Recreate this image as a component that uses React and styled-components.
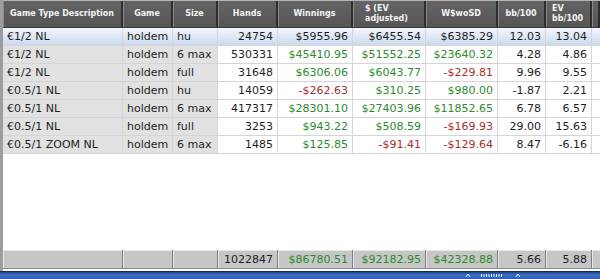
import React from "react";
import styled, { createGlobalStyle } from "styled-components";

const GlobalStyle = createGlobalStyle`
    html, body {
        margin: 0;
        padding: 0;
        background: #ffffff;
        overflow: hidden;
    }
`;

const COLS = "120px 50px 45px 60px 75px 73px 72px 48px 46px 1fr";

const Frame = styled.div`
    width: 600px;
    height: 279px;
    display: flex;
    flex-direction: column;
    font-family: "DejaVu Sans", Verdana, sans-serif;
`;

const Grid = styled.div`
    flex: 1;
    display: flex;
    flex-direction: column;
    border-left: 3px solid #9d9d9d;
    background: #ffffff;
    min-height: 0;
`;

const HeaderRow = styled.div`
    display: grid;
    grid-template-columns: ${COLS};
    height: 28px;
    background: linear-gradient(#636363, #565656);
    border-top: 1px solid #b4b4b4;
    box-sizing: border-box;
`;

const HeadCell = styled.div`
    display: flex;
    align-items: center;
    justify-content: ${(p) => (p.$left ? "flex-start" : "center")};
    padding-left: ${(p) => p.$pad || 0}px;
    color: #f4f4f4;
    font-weight: bold;
    font-size: 8px;
    line-height: 10px;
    border-right: 2px solid #2e2e2e;
    box-shadow: inset 1px 0 0 #8a8a8a;
    border-bottom: 1px solid #3a3a3a;
    box-sizing: border-box;
`;

const Row = styled.div`
    display: grid;
    grid-template-columns: ${COLS};
    height: 18px;
    background: ${(p) =>
        p.$selected ? "linear-gradient(#f3f6fb, #c8d7ec)" : "transparent"};
`;

const Cell = styled.div`
    display: flex;
    align-items: center;
    justify-content: ${(p) => (p.$right ? "flex-end" : "flex-start")};
    padding: 0 4px;
    font-size: 11px;
    white-space: nowrap;
    color: ${(p) => p.$color || "#1e1e1e"};
    background: ${(p) => (p.$gray && !p.$selected ? "#e1e1e1" : "transparent")};
    border-right: 1px solid #d5d5d5;
    border-bottom: 1px solid #d5d5d5;
    box-sizing: border-box;
`;

const Spacer = styled.div`
    flex: 1;
    background: #ffffff;
`;

const FooterRow = styled.div`
    display: grid;
    grid-template-columns: ${COLS};
    height: 19px;
    margin-bottom: 2px;
    background: #c6c6c6;
`;

const FootCell = styled.div`
    display: flex;
    align-items: center;
    justify-content: flex-end;
    padding: 0 4px;
    font-size: 11px;
    color: ${(p) => p.$color || "#1e1e1e"};
    border-right: 1px solid #7e7e7e;
    box-shadow: inset 1px 1px 0 #e8e8e8;
    border-bottom: 1px solid #8c8c8c;
    box-sizing: border-box;
`;

const BlueBar = styled.div`
    height: 7px;
    display: flex;
    align-items: flex-start;
    padding-left: 464px;
    background: linear-gradient(#1c3f86, #3c6ec4 40%, #2d5eb3);
    border-top: 1px solid #0f2a5c;
`;

const GREEN = "#2d8a2d";
const RED = "#a3302f";

const rows = [
    ["€1/2 NL", "holdem", "hu", "24754", "$5955.96", "$6455.54", "$6385.29", "12.03", "13.04"],
    ["€1/2 NL", "holdem", "6 max", "530331", "$45410.95", "$51552.25", "$23640.32", "4.28", "4.86"],
    ["€1/2 NL", "holdem", "full", "31648", "$6306.06", "$6043.77", "-$229.81", "9.96", "9.55"],
    ["€0.5/1 NL", "holdem", "hu", "14059", "-$262.63", "$310.25", "$980.00", "-1.87", "2.21"],
    ["€0.5/1 NL", "holdem", "6 max", "417317", "$28301.10", "$27403.96", "$11852.65", "6.78", "6.57"],
    ["€0.5/1 NL", "holdem", "full", "3253", "$943.22", "$508.59", "-$169.93", "29.00", "15.63"],
    ["€0.5/1 ZOOM NL", "holdem", "6 max", "1485", "$125.85", "-$91.41", "-$129.64", "8.47", "-6.16"],
];

const moneyColor = (v, selected) => {
    if (selected) return "#1e1e1e";
    return v.startsWith("-") ? RED : GREEN;
};

const ScrollMarks = () => (
    <svg width="60" height="6" viewBox="0 0 60 6">
        <path d="M2 5 L4 2 L6 5" stroke="#e8eefa" strokeWidth="1" fill="none" />
        <path d="M52 5 L54 2 L56 5" stroke="#e8eefa" strokeWidth="1" fill="none" />
        {[...Array(9)].map((_, i) => (
            <rect key={i} x={17 + i * 2.5} y={2} width={1} height={3} fill="#e8eefa" />
        ))}
    </svg>
);

const App = () => {
    return (
        <Frame>
            <GlobalStyle />
            <Grid>
                <HeaderRow>
                    <HeadCell>Game Type Description</HeadCell>
                    <HeadCell>Game</HeadCell>
                    <HeadCell>Size</HeadCell>
                    <HeadCell>Hands</HeadCell>
                    <HeadCell>Winnings</HeadCell>
                    <HeadCell $left $pad={12}>$ (EV<br />adjusted)</HeadCell>
                    <HeadCell>W$woSD</HeadCell>
                    <HeadCell>bb/100</HeadCell>
                    <HeadCell $left $pad={6}>EV<br />bb/100</HeadCell>
                    <HeadCell />
                </HeaderRow>
                {rows.map((r, i) => {
                    const sel = i === 0;
                    return (
                        <Row key={i} $selected={sel}>
                            <Cell $gray $selected={sel}>{r[0]}</Cell>
                            <Cell $gray $selected={sel}>{r[1]}</Cell>
                            <Cell $gray $selected={sel}>{r[2]}</Cell>
                            <Cell $right>{r[3]}</Cell>
                            <Cell $right $color={moneyColor(r[4], sel)}>{r[4]}</Cell>
                            <Cell $right $color={moneyColor(r[5], sel)}>{r[5]}</Cell>
                            <Cell $right $color={moneyColor(r[6], sel)}>{r[6]}</Cell>
                            <Cell $right>{r[7]}</Cell>
                            <Cell $right>{r[8]}</Cell>
                            <Cell />
                        </Row>
                    );
                })}
                <Spacer />
                <FooterRow>
                    <FootCell />
                    <FootCell />
                    <FootCell />
                    <FootCell>1022847</FootCell>
                    <FootCell $color={GREEN}>$86780.51</FootCell>
                    <FootCell $color={GREEN}>$92182.95</FootCell>
                    <FootCell $color={GREEN}>$42328.88</FootCell>
                    <FootCell>5.66</FootCell>
                    <FootCell>5.88</FootCell>
                    <FootCell />
                </FooterRow>
            </Grid>
            <BlueBar>
                <ScrollMarks />
            </BlueBar>
        </Frame>
    );
};

export default App;
